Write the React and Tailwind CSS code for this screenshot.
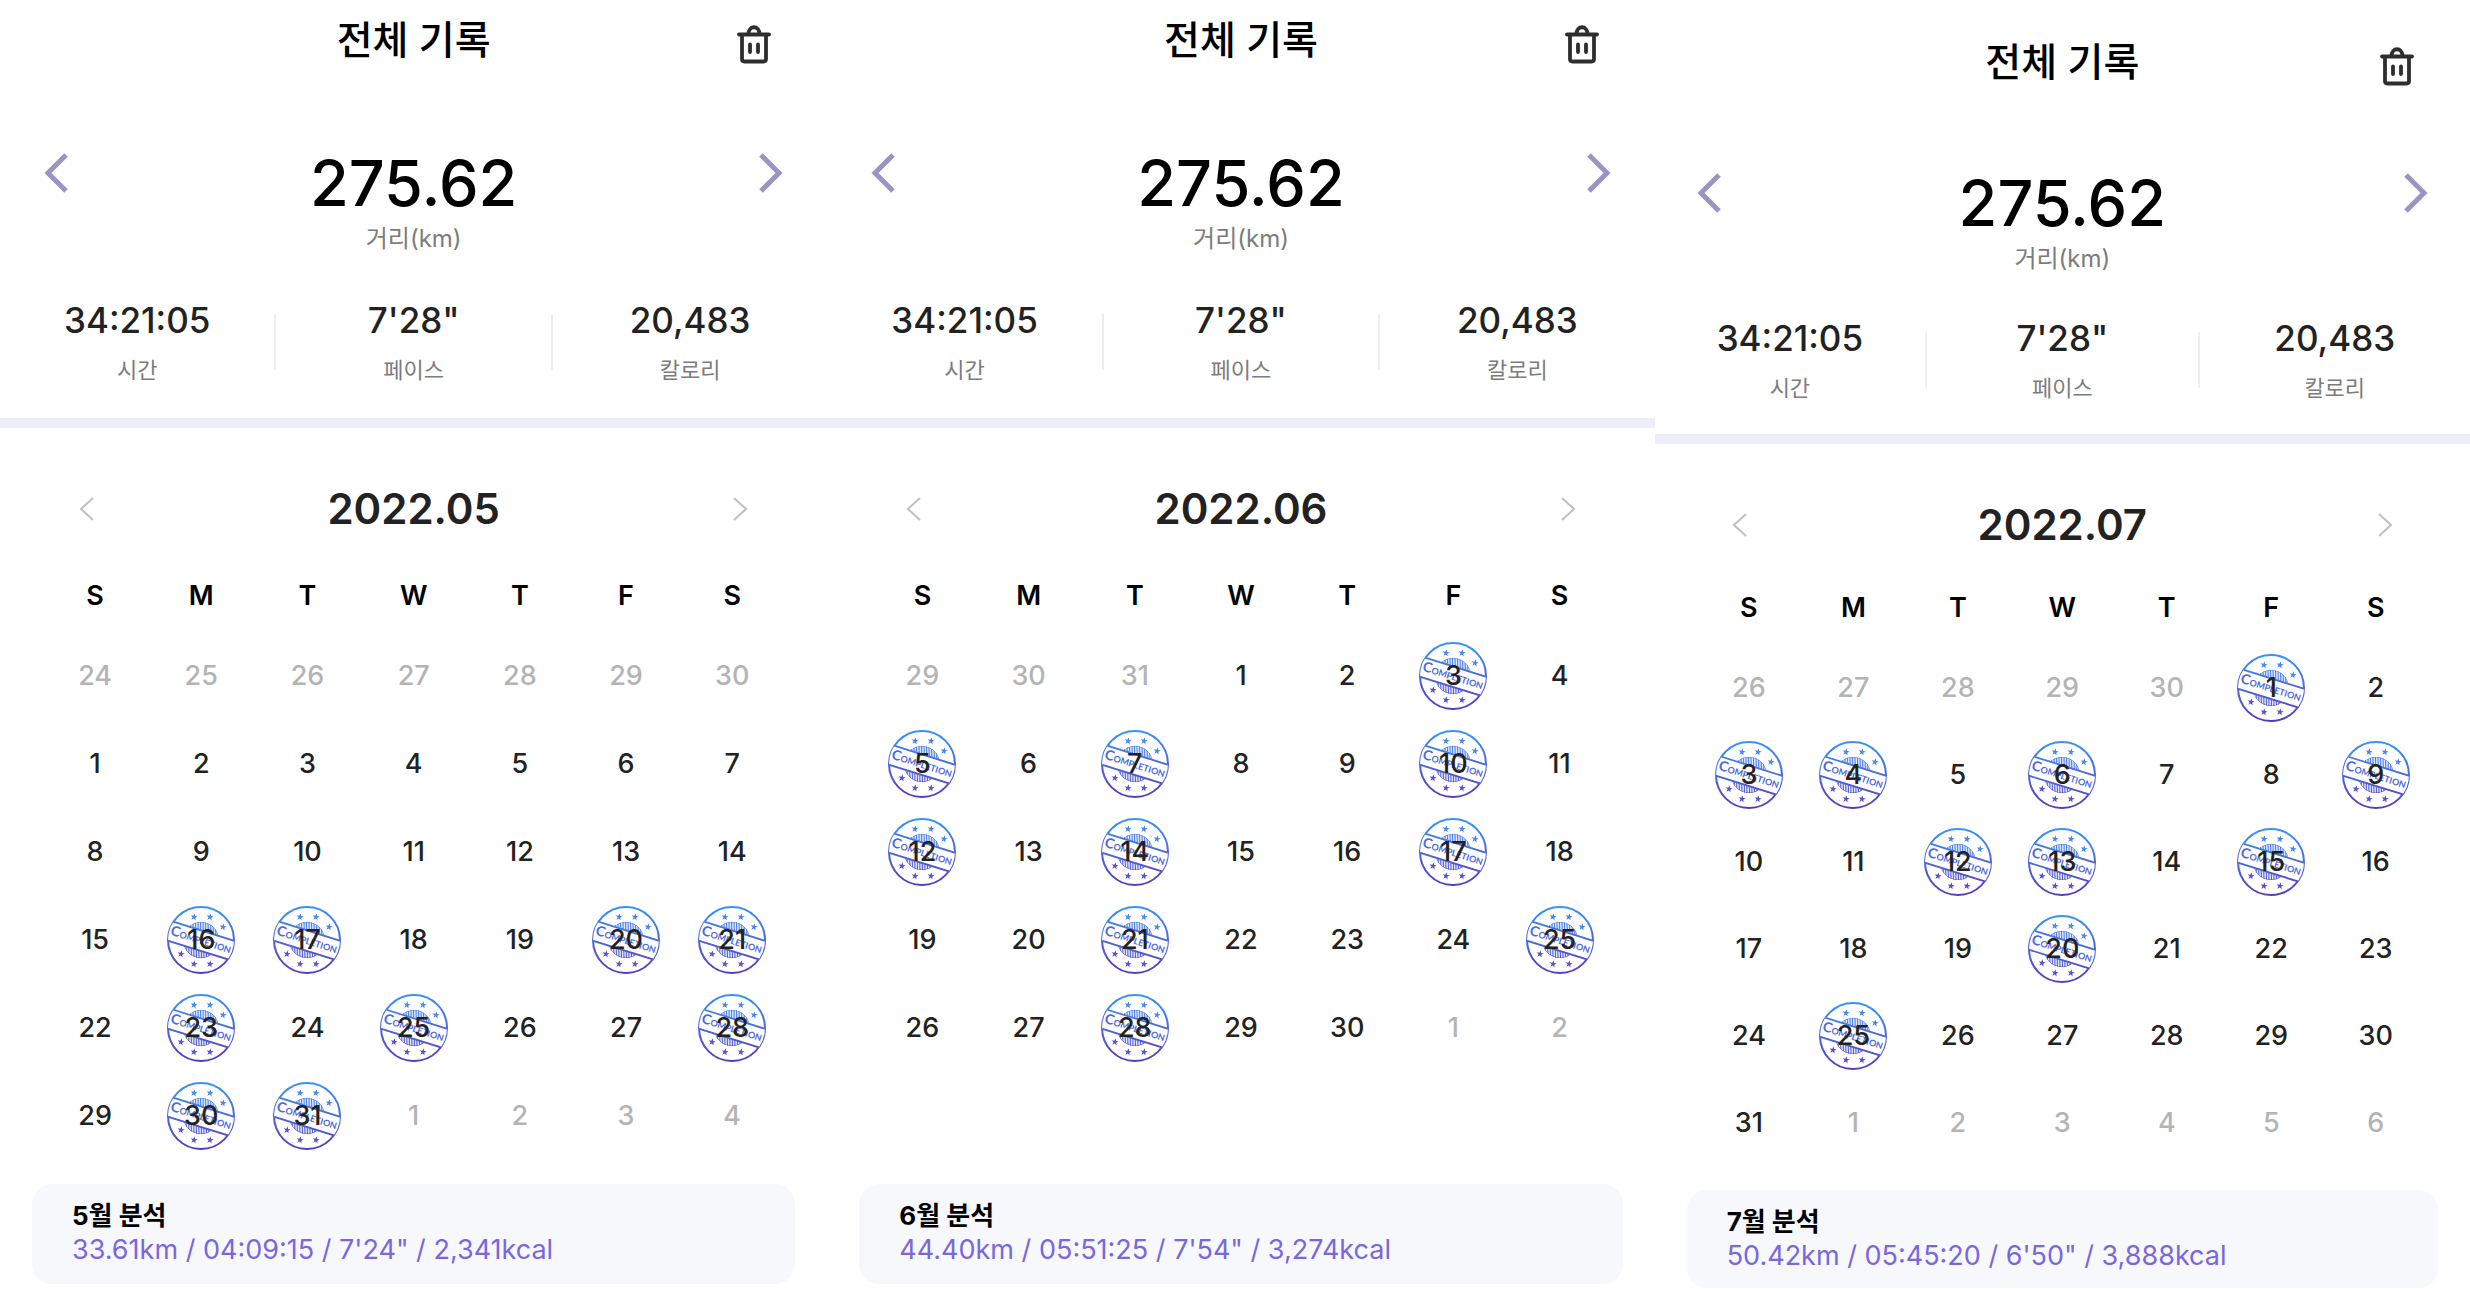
import React from "react";

const STARS = [
  [-7, -23],
  [9, -23],
  [22, -13],
  [-20, 14],
  [-7, 24],
  [9, 24],
];
const HATCH = [-15, -12.5, -10, -7.5, -5, -2.5, 0, 2.5, 5, 7.5, 10, 12.5, 15];
const WEEKDAYS = ["S", "M", "T", "W", "T", "F", "S"];

const MONTHS = [
  {
    title: "2022.05",
    label: "5월 분석",
    summary: "33.61km / 04:09:15 / 7'24\" / 2,341kcal",
    before: [24, 25, 26, 27, 28, 29, 30],
    days: 31,
    after: 4,
    stamped: [16, 17, 20, 21, 23, 25, 28, 30, 31],
  },
  {
    title: "2022.06",
    label: "6월 분석",
    summary: "44.40km / 05:51:25 / 7'54\" / 3,274kcal",
    before: [29, 30, 31],
    days: 30,
    after: 2,
    stamped: [3, 5, 7, 10, 12, 14, 17, 21, 25, 28],
  },
  {
    title: "2022.07",
    label: "7월 분석",
    summary: "50.42km / 05:45:20 / 6'50\" / 3,888kcal",
    before: [26, 27, 28, 29, 30],
    days: 31,
    after: 6,
    stamped: [1, 3, 4, 6, 9, 12, 13, 15, 20, 25],
    compact: true,
  },
];

function weeksOf(month) {
  const cells = [
    ...month.before.map((n) => ({ n, muted: true })),
    ...Array.from({ length: month.days }, (_, i) => ({
      n: i + 1,
      stamp: month.stamped.includes(i + 1),
    })),
    ...Array.from({ length: month.after }, (_, i) => ({ n: i + 1, muted: true })),
  ];
  const weeks = [];
  for (let i = 0; i < cells.length; i += 7) weeks.push(cells.slice(i, i + 7));
  return weeks;
}

function Trash() {
  return (
    <svg viewBox="0 0 34 40" className="h-10 w-[34px]" fill="none" stroke="#2e2e2e" strokeWidth="3.8" strokeLinecap="round" strokeLinejoin="round">
      <path d="M2 10.5H32" />
      <path d="M11.5 10C11.5 1 22.5 1 22.5 10" />
      <path d="M5 11V35Q5 37.5 7.5 37.5H26.5Q29 37.5 29 35V11" />
      <path d="M13 20.5V28M21 20.5V28" />
    </svg>
  );
}

function Chevron({ flip, small }) {
  return small ? (
    <svg viewBox="0 0 14 24" className="h-6 w-3.5" fill="none" stroke="#c0c0c0" strokeWidth="2">
      <path d={flip ? "M1 1L13 12L1 23" : "M13 1L1 12L13 23"} />
    </svg>
  ) : (
    <svg viewBox="0 0 24 40" className="h-10 w-6" fill="none" stroke="#9c93c4" strokeWidth="5">
      <path d={flip ? "M2 2L20 20L2 38" : "M22 2L4 20L22 38"} />
    </svg>
  );
}

function StampDefs() {
  return (
    <svg className="absolute size-0" aria-hidden="true">
      <defs>
        <linearGradient id="ink" gradientUnits="userSpaceOnUse" x1="0" y1="-34" x2="0" y2="34">
          <stop offset="0" stopColor="#3594fa" />
          <stop offset="0.5" stopColor="#4d68dc" />
          <stop offset="1" stopColor="#5a38be" />
        </linearGradient>
        <clipPath id="seal">
          <circle r="33" />
        </clipPath>
        <clipPath id="core">
          <circle r="18" />
        </clipPath>
      </defs>
    </svg>
  );
}

function Stamp() {
  return (
    <svg viewBox="-35 -35 70 70" className="absolute size-[70px]" aria-hidden="true">
      <circle r="33" fill="none" stroke="url(#ink)" strokeWidth="2" />
      <g clipPath="url(#core)" stroke="url(#ink)" strokeWidth="1">
        <circle r="18" fill="#e0e7fb" />
        {HATCH.map((x) => (
          <path key={x} d={`M${x - 0.5} -18L${x + 0.5} 18`} />
        ))}
      </g>
      <g clipPath="url(#seal)">
        <path d="M-40 -22.2L40 3V23.5L-40 -1.5Z" fill="#fff" stroke="url(#ink)" strokeWidth="1.8" />
      </g>
      <g transform="rotate(17.5)">
        <text y="4" textAnchor="middle" fill="#4d68dc" fontFamily="Lato, sans-serif" fontWeight="700" fontSize="9">
          <tspan fontSize="14">C</tspan>OMPLETION
        </text>
      </g>
      {STARS.map(([x, y]) => (
        <path
          key={`${x}${y}`}
          transform={`translate(${x} ${y}) rotate(10)`}
          d="M0 -3.8L0.9 -1.2L3.6 -1.1L1.4 0.5L2.2 3.1L0 1.5L-2.2 3.1L-1.4 0.5L-3.6 -1.1L-0.9 -1.2Z"
          fill={y < 0 ? "#4488ee" : "#5650cc"}
        />
      ))}
    </svg>
  );
}

function Stat({ value, label }) {
  return (
    <div className="flex flex-1 flex-col items-center">
      <dd className="order-first text-[35px] leading-[44px] font-medium text-[#222]">{value}</dd>
      <dt className="mt-3 text-[22px] leading-8 text-[#7c7c7c]">{label}</dt>
    </div>
  );
}

function Panel({ month }) {
  const c = month.compact;
  return (
    <section className={c ? "min-w-0 flex-1 pt-9 pb-6" : "min-w-0 flex-1 pt-3.5 pb-5"}>
      <header className="relative flex h-[52px] items-center justify-center">
        <h1 className="text-[39px] leading-[52px] font-medium text-black">전체 기록</h1>
        <button type="button" aria-label="삭제" className="absolute right-14 top-2.5">
          <Trash />
        </button>
      </header>

      <div className={c ? "flex items-start justify-between px-[42px] pt-[85px]" : "flex items-start justify-between px-11 pt-[87px]"}>
        <button type="button" aria-label="이전">
          <Chevron />
        </button>
        <div className="flex flex-col items-center">
          <p className="text-[63px] leading-[60px] font-medium text-black">275.62</p>
          <p className="mt-2 text-2xl leading-9 text-[#7c7c7c]">거리(km)</p>
        </div>
        <button type="button" aria-label="다음">
          <Chevron flip />
        </button>
      </div>

      <dl className={c ? "flex pt-[39px]" : "flex pt-[41px]"}>
        <Stat value="34:21:05" label="시간" />
        <span className="mt-4 h-14 w-0.5 bg-[#eeeeee]" />
        <Stat value={"7'28\""} label="페이스" />
        <span className="mt-4 h-14 w-0.5 bg-[#eeeeee]" />
        <Stat value="20,483" label="칼로리" />
      </dl>

      <hr className={c ? "mt-[30px] h-2.5 border-0 bg-[#eeeef8]" : "mt-8 h-2.5 border-0 bg-[#eeeef8]"} />

      <div className={c ? "flex items-center justify-between px-[78px] pt-[54px]" : "flex items-center justify-between px-20 pt-[54px]"}>
        <button type="button" aria-label="이전 달">
          <Chevron small />
        </button>
        <h2 className="text-[42px] leading-[54px] font-semibold text-[#222]">{month.title}</h2>
        <button type="button" aria-label="다음 달">
          <Chevron small flip />
        </button>
      </div>

      <div className={c ? "px-[42px] pt-9" : "px-[42px] pt-10"}>
        <table className="w-full table-fixed text-center">
          <thead>
            <tr>
              {WEEKDAYS.map((d, i) => (
                <th key={i} className="h-14 p-0 pb-4 text-[27px] leading-10 font-semibold text-black">
                  {d}
                </th>
              ))}
            </tr>
          </thead>
          <tbody>
            {weeksOf(month).map((week, i) => (
              <tr key={i}>
                {week.map((day, j) => (
                  <td key={j} className={c ? "h-[87px] p-0" : "h-[88px] p-0"}>
                    <div className="relative flex items-center justify-center">
                      {day.stamp && <Stamp />}
                      <span className={day.muted ? "relative text-[27px] leading-8 font-medium text-[#b4b4b4]" : "relative text-[27px] leading-8 font-medium text-[#222]"}>
                        {day.n}
                      </span>
                    </div>
                  </td>
                ))}
              </tr>
            ))}
          </tbody>
        </table>
      </div>
    </section>
  );
}

export default function App() {
  return (
    <main className="bg-white font-['Inter','Noto_Sans_CJK_KR',sans-serif]">
      <StampDefs />
      <div className="flex">
        {MONTHS.map((m) => (
          <div key={m.title} className={m.compact ? "flex flex-[815] flex-col justify-between" : "flex flex-[827] flex-col justify-between"}>
            <Panel month={m} />
            <aside className={m.compact ? "mx-8 mb-1 rounded-[20px] bg-[#f7f8fc] px-10 pt-4 pb-3.5" : "mx-8 mb-2 rounded-[20px] bg-[#f7f8fc] px-10 pt-4 pb-4"}>
              <h3 className="text-[26px] leading-8 font-bold text-black">{m.label}</h3>
              <p className="text-[27px] leading-9 text-[#7a67dc]">{m.summary}</p>
            </aside>
          </div>
        ))}
      </div>
    </main>
  );
}
